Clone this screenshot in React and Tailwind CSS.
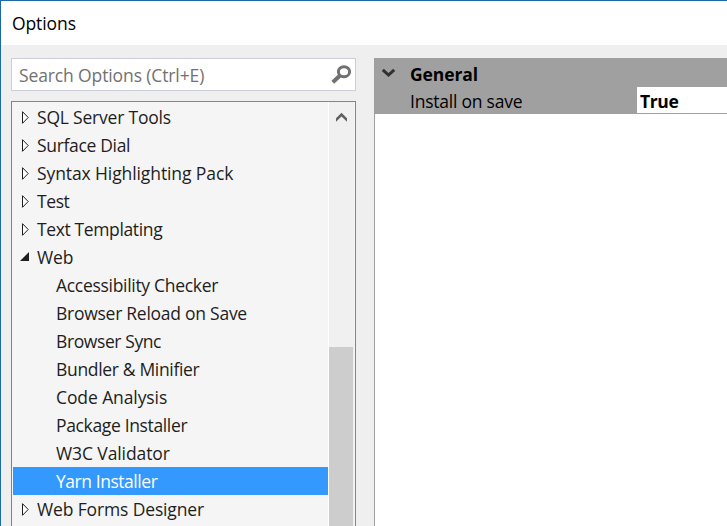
const ITEMS = [
  { label: 'SQL Server Tools', state: 'closed', fit: 'tracking-[-0.2px]' },
  { label: 'Surface Dial', state: 'closed', fit: 'tracking-[-0.33px]' },
  { label: 'Syntax Highlighting Pack', state: 'closed', fit: 'tracking-[-0.1px]' },
  { label: 'Test', state: 'closed', fit: 'tracking-[-0.4px]' },
  { label: 'Text Templating', state: 'closed', fit: 'tracking-[-0.37px]' },
  { label: 'Web', state: 'open', fit: 'tracking-[-0.1px]' },
  { label: 'Accessibility Checker', fit: 'tracking-[-0.3px]' },
  { label: 'Browser Reload on Save', fit: 'tracking-[-0.26px]' },
  { label: 'Browser Sync', fit: 'tracking-[-0.4px]' },
  { label: 'Bundler & Minifier', fit: 'tracking-[-0.33px]' },
  { label: 'Code Analysis', fit: 'tracking-[-0.1px]' },
  { label: 'Package Installer', fit: 'tracking-[-0.35px]' },
  { label: 'W3C Validator', fit: 'tracking-[-0.1px]' },
  { label: 'Yarn Installer', selected: true, fit: 'tracking-[-0.45px]' },
  { label: 'Web Forms Designer', state: 'closed', fit: 'tracking-[-0.14px]' },
];

function Expander({ state }) {
  return (
    <svg width="24" height="28" viewBox="0 0 24 28" className="shrink-0">
      {state === 'closed' ? (
        <path d="M9.5 8.7v11.6l5.7-5.8z" fill="#fff" stroke="#1e1e1e" strokeWidth="1" />
      ) : (
        <path d="M16 9v9H7z" fill="#1e1e1e" />
      )}
    </svg>
  );
}

function TreeRow({ item }) {
  return (
    <div
      className={`flex h-7 shrink-0 items-center whitespace-nowrap ${item.selected ? 'bg-[#3399ff] text-white' : 'text-[#1e1e1e]'} ${item.state ? '' : 'pl-[43px]'}`}
    >
      {item.state && <Expander state={item.state} />}
      <span className={item.fit}>{item.label}</span>
    </div>
  );
}

export default function App() {
  return (
    <div className="flex h-[526px] w-[727px] flex-col overflow-hidden border-t border-l border-[#1a6aa8] bg-[#efefef] font-['Open_Sans','Noto_Sans',sans-serif] text-[17.5px] leading-7">
      <header className="flex h-11 shrink-0 items-center bg-white pl-[11px] text-black">
        <span className="tracking-[-0.1px]">Options</span>
      </header>
      <main className="flex min-h-0 flex-1 gap-[18px] pt-[13px] pl-2.5">
        <section className="flex w-[345px] shrink-0 flex-col gap-2.5">
          <div className="flex h-[33px] shrink-0 items-center justify-between border border-[#cccedb] bg-white pr-[3px] pl-[7px] text-[#717171]">
            <span className="tracking-[-0.12px]">Search Options (Ctrl+E)</span>
            <svg width="22" height="22" viewBox="0 0 22 22" fill="none" stroke="#717171">
              <ellipse cx="14" cy="7.7" rx="5.6" ry="5" strokeWidth="3" />
              <path d="M10 11.5L2.8 18.3" strokeWidth="4" />
            </svg>
          </div>
          <div className="flex min-h-0 flex-1 border border-b-0 border-[#828290] bg-[#f5f5f5]">
            <div className="flex min-w-0 flex-1 flex-col overflow-hidden pt-px pl-px">
              {ITEMS.map((item) => (
                <TreeRow key={item.label} item={item} />
              ))}
            </div>
            <div className="mr-px flex w-[26px] shrink-0 flex-col border-l border-white bg-[#f0f0f0] pr-px">
              <div className="flex h-[245px] shrink-0 justify-center">
                <svg width="24" height="30" viewBox="0 0 24 30">
                  <path d="M7 16.3L12.5 10.8L18 16.3V19.8L12.5 14.6L7 19.8z" fill="#606060" />
                </svg>
              </div>
              <div className="flex-1 bg-[#cdcdcd]" />
            </div>
          </div>
        </section>
        <section className="flex min-w-0 flex-1 flex-col border-l border-[#a0a0a0] bg-white text-black">
          <div className="flex h-[29px] shrink-0 items-center bg-[#a0a0a0]">
            <svg width="35" height="29" viewBox="0 0 35 29" fill="none" className="shrink-0">
              <path d="M7.8 11.8L13.5 17L19.2 11.8" stroke="#303030" strokeWidth="3" />
            </svg>
            <span className="pt-0.5 font-bold tracking-[-0.1px]">General</span>
          </div>
          <div className="flex h-[27px] shrink-0 items-center border-b border-[#a0a0a0]">
            <div className="flex h-[27px] w-[262px] shrink-0 items-center self-start bg-[#a0a0a0] pl-[35px]">
              <span className="tracking-[-0.23px]">Install on save</span>
            </div>
            <span className="pt-0.5 pl-[3px] font-bold tracking-[-0.4px]">True</span>
          </div>
        </section>
      </main>
    </div>
  );
}
